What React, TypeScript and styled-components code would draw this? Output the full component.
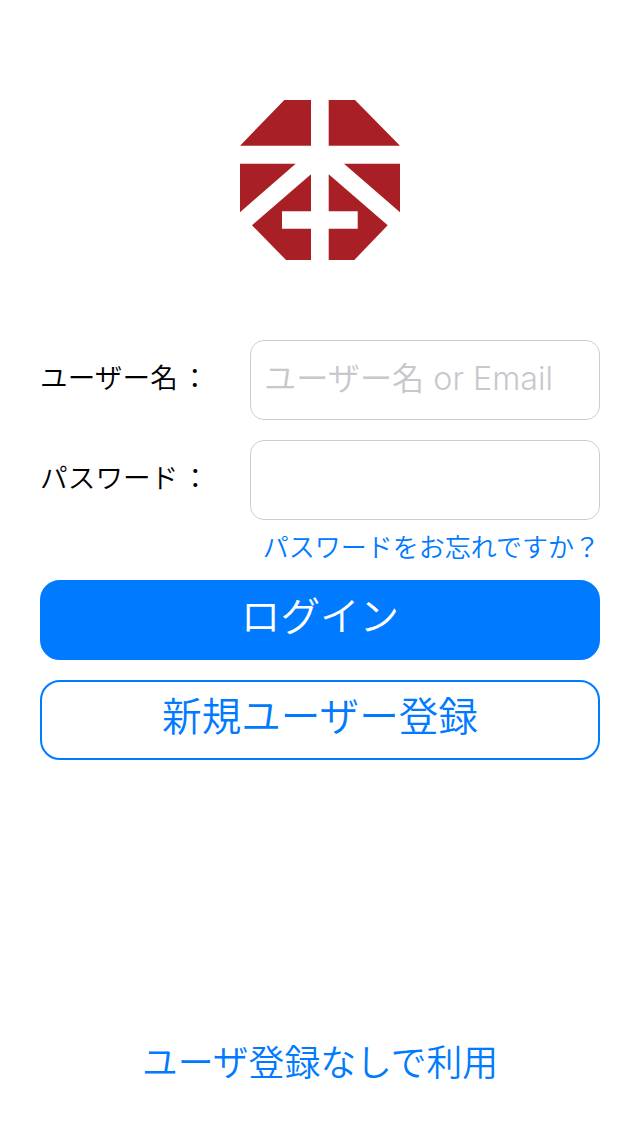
import React from "react";
import styled, { createGlobalStyle } from "styled-components";

const Global = createGlobalStyle`
  html, body { margin: 0; padding: 0; background: #fff; }
  body { font-family: "Inter", "Noto Sans CJK JP", sans-serif; }
`;

const Page = styled.main`
  width: 640px;
  height: 1136px;
  box-sizing: border-box;
  padding: 100px 40px 0;
  display: flex;
  flex-direction: column;
  background: #fff;
`;

const LogoWrap = styled.div`
  display: flex;
  justify-content: center;
  height: 160px;
  margin-bottom: 80px;
`;

const Form = styled.form`
  display: flex;
  flex-direction: column;
  gap: 20px;
`;

const Row = styled.div`
  display: flex;
  align-items: center;
  height: 80px;
`;

const Label = styled.label`
  width: 210px;
  flex: none;
  font-size: 27.6px;
  line-height: 36px;
  height: 44px;
  color: #000;
  font-family: "Noto Sans CJK JP", sans-serif;
  font-weight: 350;
  letter-spacing: 0.1px;
`;

const Colon = styled.span`
  margin-left: 3px;
`;

const Input = styled.input`
  flex: 1;
  min-width: 0;
  height: 80px;
  box-sizing: border-box;
  border: 1px solid #cdcdcd;
  border-radius: 14px;
  padding: 0 12px 4px 13px;
  font-size: 32.2px;
  font-weight: 350;
  font-family: "Inter", "Noto Sans CJK JP", sans-serif;
  background: #fff;
  outline: none;
  &::placeholder { color: #c7c7cd; opacity: 1; }
`;

const Forgot = styled.a`
  display: block;
  text-align: right;
  font-size: 26px;
  line-height: 36px;
  height: 40px;
  margin: -12px 0 -8px 0;
  color: #007aff;
  font-family: "Noto Sans CJK JP", sans-serif;
  font-weight: 350;
`;

const Button = styled.button<{ $filled?: boolean }>`
  height: 80px;
  box-sizing: border-box;
  border-radius: 20px;
  border: 2px solid #007aff;
  background: ${(p) => (p.$filled ? "#007aff" : "#fff")};
  color: ${(p) => (p.$filled ? "#fff" : "#007aff")};
  font-size: 39.6px;
  font-weight: 350;
  font-family: "Noto Sans CJK JP", sans-serif;
  padding: 0 0 13px;
`;

const Spacer = styled.div`
  flex: 1;
`;

const GuestLink = styled.a`
  display: block;
  text-align: center;
  font-size: 35.8px;
  line-height: 48px;
  margin-bottom: 52px;
  color: #007aff;
  font-family: "Noto Sans CJK JP", sans-serif;
  font-weight: 350;
`;

const Logo = () => (
  <svg width="160" height="160" viewBox="0 0 160 160" fill="#a82025" aria-label="logo">
    <polygon points="44.3,0 71,0 71,45.7 0,45.7" />
    <polygon points="88.7,0 115,0 160,45.7 88.7,45.7" />
    <polygon points="0,63.7 55.7,63.7 0,112.3" />
    <polygon points="104,63.7 160,63.7 160,112.3" />
    <polygon points="71,74.3 71,111.3 42,111.3 42,128.7 71,128.7 71,160 46,160 12,125.3" />
    <polygon points="88.7,74.3 147.7,125.3 114.3,160 88.7,160 88.7,128.7 117.7,128.7 117.7,111.3 88.7,111.3" />
  </svg>
);

export default function App() {
  return (
    <>
      <Global />
      <Page>
        <LogoWrap>
          <Logo />
        </LogoWrap>
        <Form onSubmit={(e) => e.preventDefault()}>
          <Row>
            <Label>ユーザー名<Colon>：</Colon></Label>
            <Input placeholder="ユーザー名 or Email" />
          </Row>
          <Row>
            <Label>パスワード<Colon>：</Colon></Label>
            <Input type="password" />
          </Row>
          <Forgot>パスワードをお忘れですか？</Forgot>
          <Button $filled type="button">ログイン</Button>
          <Button type="button">新規ユーザー登録</Button>
        </Form>
        <Spacer />
        <GuestLink>ユーザ登録なしで利用</GuestLink>
      </Page>
    </>
  );
}
